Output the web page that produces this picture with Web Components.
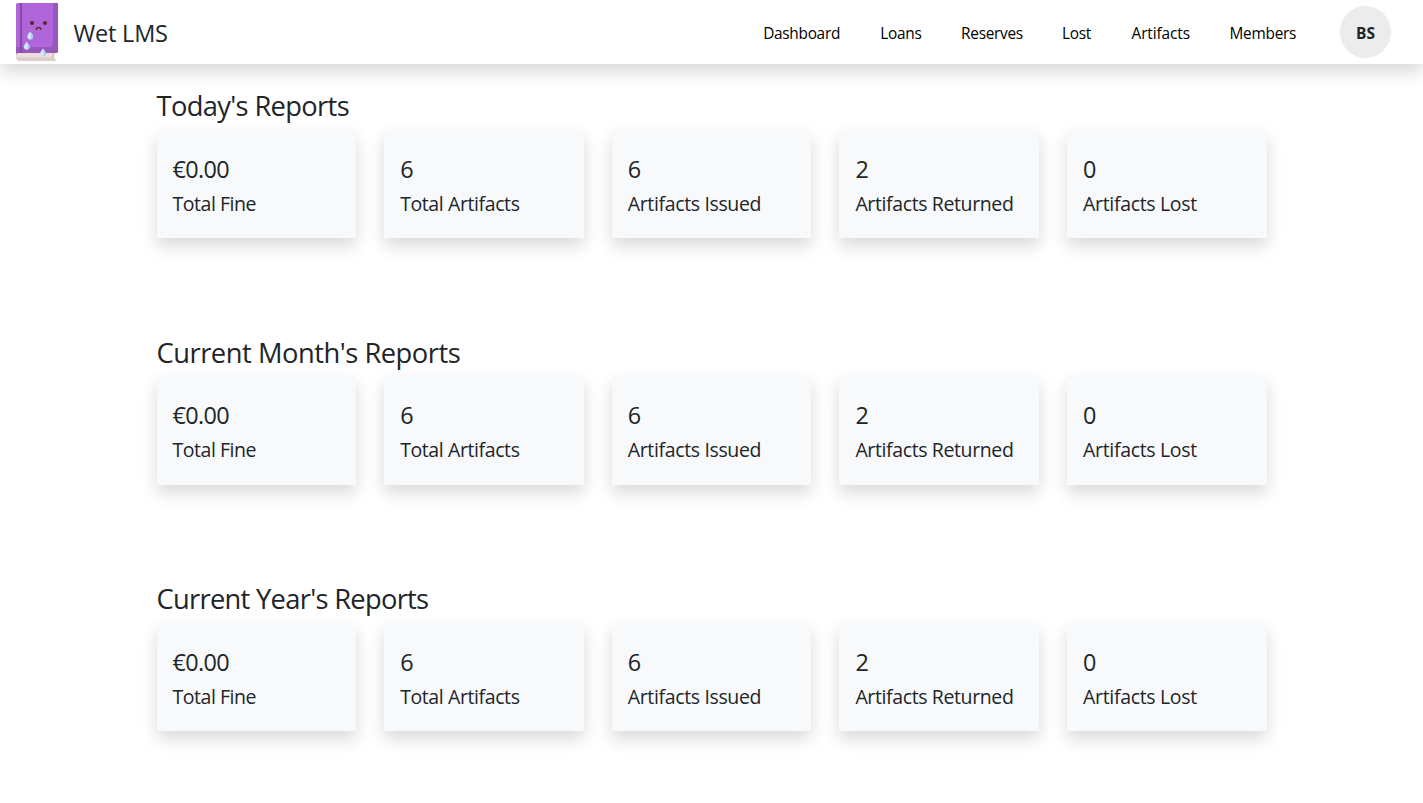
<!DOCTYPE html>
<html lang="en">
<head>
<meta charset="utf-8">
<title>Wet LMS</title>
<style>
body{margin:0;font-family:"Open Sans","Noto Sans",sans-serif;color:#212529;background:#fff}
</style>
</head>
<body>
<lms-app></lms-app>

<template id="t-logo">
<style>:host{display:block;width:42px;height:58px}svg{display:block}</style>
<svg width="42" height="58" viewBox="0 0 42 58">
<path d="M0 50h39.500l-1.500 4 2 4H3q-3-1-3-5z" fill="#ecdfdc"/>
<path d="M0 54.500h38l2 3.500H3q-3-1-3-3.500z" fill="#dccfcb"/>
<path d="M36.500 49.500h2.500l-1.500 4.500 1.500 3.500h-2.500l-1-3.500z" fill="#d9cbc7"/>
<path d="M2.500 0H42v48.500q0 1.500-1.500 1.500H2q-2 0-2 2V2.500Q0 0 2.500 0z" fill="#9659bb"/>
<path d="M2.500 0H37v40q0 4-4 4H0V2.500Q0 0 2.500 0z" fill="#b066da"/>
<path d="M4 0h2v50H4z" fill="#8549a6"/>
<circle cx="16" cy="20" r="2.100" fill="#57292b"/><circle cx="29" cy="20" r="2.100" fill="#57292b"/>
<path d="M20.400 26.500q0-2 2.200-2t2.200 2" fill="none" stroke="#57292b" stroke-width="1.300" stroke-linecap="round"/>
<g>
<path d="M14.200 28.500q2.900 3.600 2.900 5.100a2.900 2.800 0 0 1-5.800 0q0-1.500 2.900-5.100z" fill="#cfe6fb"/><path d="M14.200 28.500q2.900 3.600 2.900 5.100a2.900 2.800 0 0 1-2.900 2.800q2-3 0-7.900z" fill="#a5cdf3"/>
<path d="M10.700 38.700q2.900 3.600 2.900 5.100a2.900 2.800 0 0 1-5.800 0q0-1.500 2.900-5.100z" fill="#cfe6fb"/><path d="M10.700 38.700q2.900 3.600 2.900 5.100a2.900 2.800 0 0 1-2.900 2.800q2-3 0-7.900z" fill="#a5cdf3"/>
<path d="M27 45.500q2.900 3.600 2.900 5.100a2.900 2.800 0 0 1-5.800 0q0-1.500 2.900-5.100z" fill="#cfe6fb"/><path d="M27 45.500q2.900 3.600 2.900 5.100a2.900 2.800 0 0 1-2.900 2.800q2-3 0-7.900z" fill="#a5cdf3"/>
</g>
</svg>
</template>

<template id="t-header">
<style>
:host{display:flex;align-items:center;box-sizing:border-box;height:64px;padding:0 32px 0 16px;background:#fff;box-shadow:0 8px 16px rgba(0,0,0,.15)}
.brand{margin-left:15.500px;font-size:23.500px;line-height:36px;letter-spacing:-.2px;padding-top:2px}
nav{display:flex;gap:40px;margin-left:auto;margin-right:43.500px;padding-top:3px}
.avatar{display:flex;align-items:center;justify-content:center;width:51px;height:52px;border-radius:50%;background:#ececec;font-size:15.500px;font-weight:700;letter-spacing:-.1px;line-height:24px}
.avatar span{padding-top:2px}
</style>
<lms-logo></lms-logo>
<div class="brand">Wet LMS</div>
<nav>
<nav-link style="width:77.200px;letter-spacing:-.28px">Dashboard</nav-link>
<nav-link style="width:40.800px;letter-spacing:-.27px">Loans</nav-link>
<nav-link style="width:61px;letter-spacing:-.3px">Reserves</nav-link>
<nav-link style="width:29.400px;letter-spacing:-.35px">Lost</nav-link>
<nav-link style="width:58px;letter-spacing:-.1px">Artifacts</nav-link>
<nav-link style="width:67px;letter-spacing:-.25px">Members</nav-link>
</nav>
<div class="avatar"><span>BS</span></div>
</template>

<template id="t-link">
<style>:host{display:block;font-size:15.400px;line-height:24px;white-space:nowrap;color:#000}</style>
<slot></slot>
</template>

<template id="t-card">
<style>
:host{display:block;box-sizing:border-box;height:108.300px;padding:25px 16px 0;background:#f8f9fb;box-shadow:0 8px 16px rgba(0,0,0,.15);white-space:nowrap}
.value{font-size:23.400px;line-height:28.800px;letter-spacing:-.6px;margin-bottom:8px}
.label{font-size:19.500px;line-height:24px}
</style>
<div class="value"><slot name="value"></slot></div>
<div class="label"><slot></slot></div>
</template>

<template id="t-section">
<style>
:host{display:block;height:246.500px}
h3{margin:0 0 7px;padding-top:1px;font-size:27.300px;font-weight:400;line-height:33.600px;white-space:nowrap}
.grid{display:grid;grid-template-columns:repeat(5,1fr);gap:28px}
</style>
<h3><slot></slot></h3>
<div class="grid">
<stat-card style="letter-spacing:-.46px"><span slot="value">€0.00</span>Total Fine</stat-card>
<stat-card style="letter-spacing:-.4px"><span slot="value">6</span>Total Artifacts</stat-card>
<stat-card style="letter-spacing:-.36px"><span slot="value">6</span>Artifacts Issued</stat-card>
<stat-card style="letter-spacing:-.38px"><span slot="value">2</span>Artifacts Returned</stat-card>
<stat-card style="letter-spacing:-.33px"><span slot="value">0</span>Artifacts Lost</stat-card>
</div>
</template>

<template id="t-app">
<style>
:host{display:block;height:803px;overflow:hidden}
main{width:1110.200px;margin:0 auto;padding:24.400px 0 0 .200px}
</style>
<lms-header></lms-header>
<main>
<report-section><span style="letter-spacing:-.65px">Today's Reports</span></report-section>
<report-section><span style="letter-spacing:-.47px">Current Month's Reports</span></report-section>
<report-section><span style="letter-spacing:-.7px">Current Year's Reports</span></report-section>
</main>
</template>

<script>
function define(name, id) {
  customElements.define(name, class extends HTMLElement {
    constructor() {
      super();
      this.attachShadow({ mode: 'open' }).append(document.getElementById(id).content.cloneNode(true));
    }
  });
}
define('lms-logo', 't-logo');
define('nav-link', 't-link');
define('stat-card', 't-card');
define('report-section', 't-section');
define('lms-header', 't-header');
define('lms-app', 't-app');
</script>
</body>
</html>
